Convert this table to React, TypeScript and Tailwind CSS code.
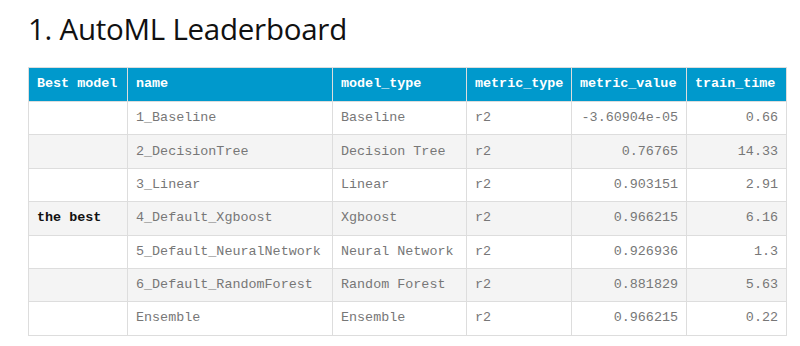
const rows = [
  { best: "", name: "1_Baseline", type: "Baseline", metric: "r2", value: "-3.60904e-05", time: "0.66" },
  { best: "", name: "2_DecisionTree", type: "Decision Tree", metric: "r2", value: "0.76765", time: "14.33" },
  { best: "", name: "3_Linear", type: "Linear", metric: "r2", value: "0.903151", time: "2.91" },
  { best: "the best", name: "4_Default_Xgboost", type: "Xgboost", metric: "r2", value: "0.966215", time: "6.16" },
  { best: "", name: "5_Default_NeuralNetwork", type: "Neural Network", metric: "r2", value: "0.926936", time: "1.3" },
  { best: "", name: "6_Default_RandomForest", type: "Random Forest", metric: "r2", value: "0.881829", time: "5.63" },
  { best: "", name: "Ensemble", type: "Ensemble", metric: "r2", value: "0.966215", time: "0.22" },
];

const App = () => {
  return (
    <div className="w-[800px] h-[346px] bg-white px-[28px] pt-[10px]">
      <h1 className="font-['Open_Sans','Noto_Sans',sans-serif] text-[29.5px] leading-[38px] text-[#111] tracking-[-0.25px]">
        1. AutoML Leaderboard
      </h1>
      <table className="mt-[19px] w-[758px] table-fixed border-collapse font-['Liberation_Mono','Courier_New',monospace] text-[13.4px]">
        <colgroup>
          <col className="w-[99px]" />
          <col className="w-[205px]" />
          <col className="w-[134px]" />
          <col className="w-[105px]" />
          <col className="w-[115px]" />
          <col className="w-[100px]" />
        </colgroup>
        <thead>
          <tr className="h-[34px] bg-[#0099cc] text-white font-bold">
            <th className="border border-[#dddddd] px-[8px] text-left">Best model</th>
            <th className="border border-[#dddddd] px-[8px] text-left">name</th>
            <th className="border border-[#dddddd] px-[8px] text-left">model_type</th>
            <th className="border border-[#dddddd] px-[8px] text-left">metric_type</th>
            <th className="border border-[#dddddd] px-[8px] text-left">metric_value</th>
            <th className="border border-[#dddddd] px-[8px] text-left">train_time</th>
          </tr>
        </thead>
        <tbody>
          {rows.map((r, i) => (
            <tr key={r.name} className={`h-[33.4px] ${i % 2 === 1 ? "bg-[#f4f4f4]" : "bg-white"}`}>
              <td className="border border-[#dddddd] px-[8px] font-bold text-[#111]">{r.best}</td>
              <td className="border border-[#dddddd] px-[8px] text-[#777]">{r.name}</td>
              <td className="border border-[#dddddd] px-[8px] text-[#777]">{r.type}</td>
              <td className="border border-[#dddddd] px-[8px] text-[#777]">{r.metric}</td>
              <td className="border border-[#dddddd] px-[8px] text-right text-[#777]">{r.value}</td>
              <td className="border border-[#dddddd] px-[8px] text-right text-[#777]">{r.time}</td>
            </tr>
          ))}
        </tbody>
      </table>
    </div>
  );
};

export default App;
